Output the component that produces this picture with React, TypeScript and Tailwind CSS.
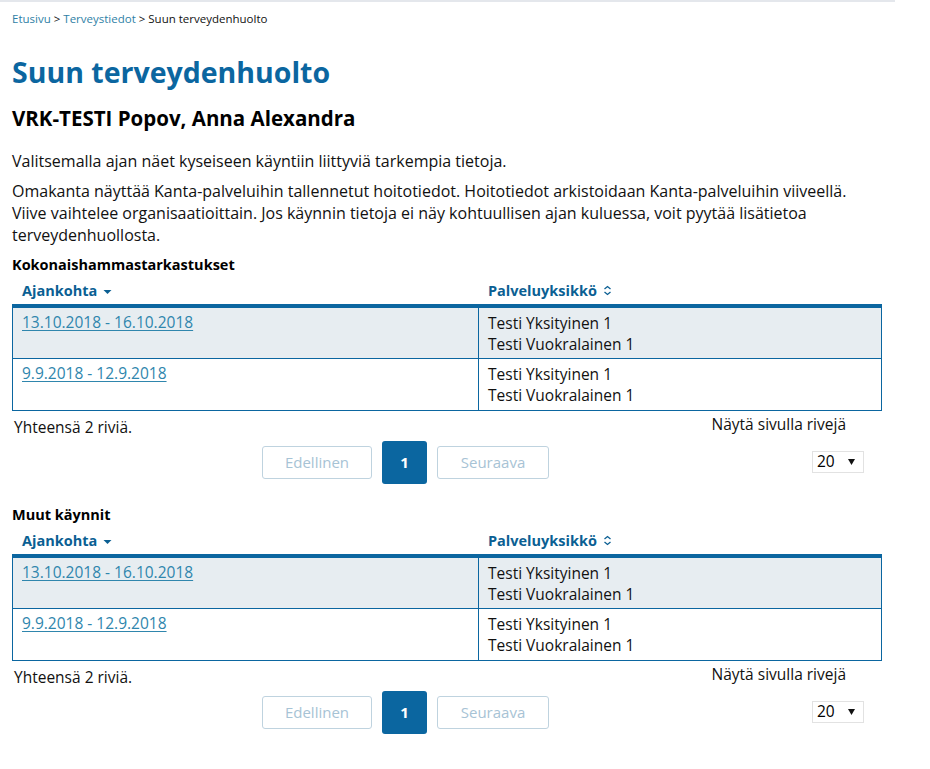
const rows = [
  { date: "13.10.2018 - 16.10.2018", units: ["Testi Yksityinen 1", "Testi Vuokralainen 1"] },
  { date: "9.9.2018 - 12.9.2018", units: ["Testi Yksityinen 1", "Testi Vuokralainen 1"] },
];

const SortDown = () => (
  <svg width="9" height="6" viewBox="0 0 9 6" className="ml-[6px] mt-[2px]">
    <path d="M0.5 1 L8.5 1 L4.5 5 Z" fill="#0b5f93" />
  </svg>
);

const SortBoth = () => (
  <svg width="9" height="11" viewBox="0 0 9 11" className="ml-[6px]">
    <path d="M1.5 4 L4.5 1.5 L7.5 4 M1.5 7 L4.5 9.5 L7.5 7" fill="none" stroke="#0b5f93" strokeWidth="1.3" />
  </svg>
);

const VisitTable = ({ title }: { title: string }) => (
  <section>
    <h3 className="text-[14.5px] font-bold leading-[20px] text-black">{title}</h3>
    <div className="w-[870px]">
      <div className="flex h-[29px] items-center pt-[2px] text-[14.5px] font-bold text-[#0b5f93]">
        <div className="flex w-[467px] items-center pl-[10px]">
          Ajankohta
          <SortDown />
        </div>
        <div className="flex items-center pl-[9px]">
          Palveluyksikkö
          <SortBoth />
        </div>
      </div>
      <div className="border-x border-b border-t-4 border-[#0b66a0]">
        {rows.map((r, i) => (
          <div
            key={r.date}
            className={`flex h-[51px] text-[15.5px] leading-[21px] ${
              i === 0 ? "bg-[#e7edf1] border-b border-[#0b66a0]" : "bg-white h-[50px]"
            }`}
          >
            <div className="w-[466px] border-r border-[#0b66a0] pl-[9px] pt-[4px]">
              <a href="#" className="text-[#2f86ad] underline underline-offset-2">
                {r.date}
              </a>
            </div>
            <div className="pl-[9px] pt-[5px] text-[#111]">
              {r.units.map((u) => (
                <div key={u}>{u}</div>
              ))}
            </div>
          </div>
        ))}
      </div>
      <div className="flex justify-between text-[15.5px] leading-[20px] text-[#111]">
        <div className="pl-[2px] pt-[6px]">Yhteensä 2 riviä.</div>
        <div className="pr-[36px] pt-[3px]">Näytä sivulla rivejä</div>
      </div>
      <div className="relative flex h-[50px] items-center pl-[250px]">
        <div className="flex items-center gap-[10px]">
          <button className="h-[33px] w-[110px] rounded-[3px] border border-[#bfd3df] text-[15px] text-[#a7c3d5]">
            Edellinen
          </button>
          <button className="h-[43px] w-[45px] rounded-[3px] bg-[#0b66a0] text-[15px] font-bold text-white">
            1
          </button>
          <button className="h-[33px] w-[112px] rounded-[3px] border border-[#bfd3df] text-[15px] text-[#a7c3d5]">
            Seuraava
          </button>
        </div>
        <div className="absolute right-[18px] top-[14px] flex h-[22px] w-[52px] items-center justify-between border border-[#e2e2e2] pl-[4px] pr-[8px] text-[15.5px] text-black">
          <span>20</span>
          <svg width="7" height="6" viewBox="0 0 7 6">
            <path d="M0 0 L7 0 L3.5 6 Z" fill="#111" />
          </svg>
        </div>
      </div>
    </div>
  </section>
);

export default function App() {
  return (
    <div className="min-h-screen bg-white font-['Open_Sans',sans-serif] text-[#111]">
      <div className="h-[2px] w-[895px] bg-[#e4e7ec]" />
      <div className="px-[12px]">
        <nav className="pt-[9px] text-[11.5px] leading-[16px]">
          <a href="#" className="text-[#2f7fa6]">Etusivu</a>
          <span> &gt; </span>
          <a href="#" className="text-[#2f7fa6]">Terveystiedot</a>
          <span> &gt; Suun terveydenhuolto</span>
        </nav>
        <h1 className="mt-[27px] text-[28.5px] font-bold leading-[36px] text-[#0b66a0]">
          Suun terveydenhuolto
        </h1>
        <h2 className="mt-[15px] text-[20.5px] font-bold leading-[26px] text-black">
          VRK-TESTI Popov, Anna Alexandra
        </h2>
        <p className="mt-[19px] text-[16px] leading-[22px]">
          Valitsemalla ajan näet kyseiseen käyntiin liittyviä tarkempia tietoja.
        </p>
        <p className="mt-[8px] w-[840px] text-[16px] leading-[22px]">
          Omakanta näyttää Kanta-palveluihin tallennetut hoitotiedot. Hoitotiedot arkistoidaan Kanta-palveluihin viiveellä. Viive vaihtelee organisaatioittain. Jos käynnin tietoja ei näy kohtuullisen ajan kuluessa, voit pyytää lisätietoa terveydenhuollosta.
        </p>
        <div className="mt-[9px]">
          <VisitTable title="Kokonaishammastarkastukset" />
        </div>
        <div className="mt-[18px]">
          <VisitTable title="Muut käynnit" />
        </div>
      </div>
    </div>
  );
}
